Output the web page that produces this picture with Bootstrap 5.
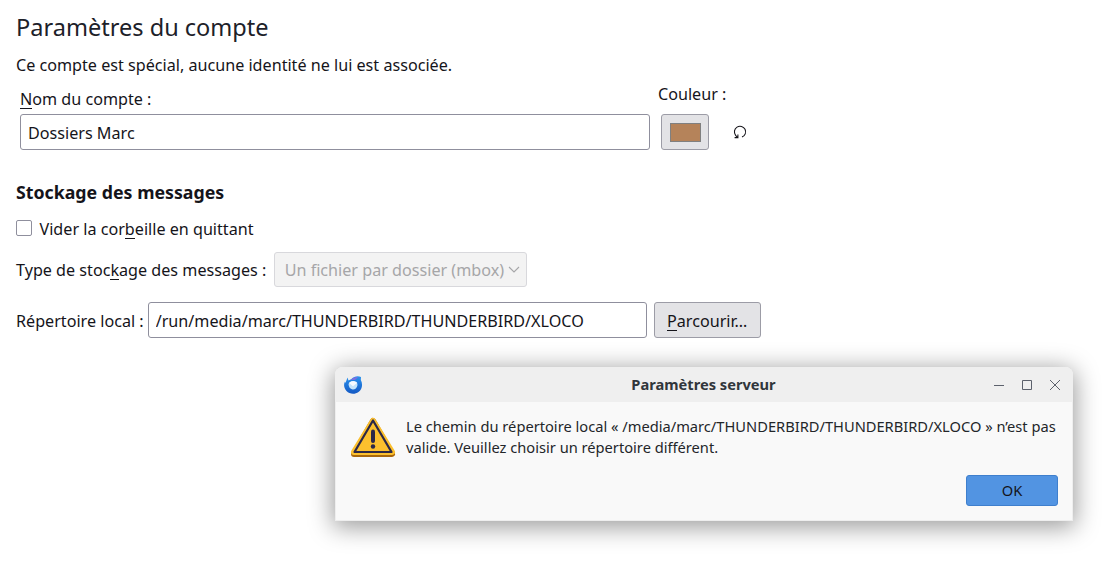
<!DOCTYPE html>
<html lang="fr">
<head>
    <meta charset="UTF-8">
    <meta name="viewport" content="width=device-width, initial-scale=1.0">
    <title>Paramètres du compte</title>
    <link rel="stylesheet" href="https://cdn.jsdelivr.net/npm/bootstrap@5.3.0/dist/css/bootstrap.min.css">
    <style>
        body {
            font-family: "Noto Sans", sans-serif;
            font-size: 16.15px;
            line-height: 22px;
            color: #15141a;
            background: #fff;
            overflow: hidden;
            white-space: nowrap;
        }
        .page { padding: 11px 16px 0; }
        .page-title { font-size: 23.55px; line-height: 33px; font-weight: 400; color: #1d2129; margin: 0 0 10px; }
        .section-title { font-size: 17.75px; line-height: 24px; font-weight: 700; margin: 30px 0 14px; }
        /* Access key underline */
        .key { border-bottom: 1px solid #15141a; display: inline-block; line-height: 18px; }
        .form-control, .form-check-input, .btn {
            border-radius: 3px;
            color: #15141a;
            box-shadow: none;
        }
        .form-control {
            height: 36px;
            padding: 2px 7px 0;
            border-color: #8f8f9d;
            font-size: 16.15px;
        }
        .account-row { margin-top: 7px; }
        .name-col { width: 630px; margin-left: 4px; padding-top: 5px; }
        .name-col label { margin-bottom: 4px; }
        .color-col { margin-left: 8px; }
        .color-col label { margin-bottom: 9px; }
        .btn-grey {
            height: 36px;
            padding: 0;
            font-size: 16.15px;
            background: #e3e3e6;
            border: 1px solid #9c9ca6;
        }
        .btn-color { width: 48px; margin-left: 3px; }
        .swatch { width: 31px; height: 19px; background: #b5835a; border: 1px solid #808080; }
        .reset { margin-left: 24px; }
        .form-check-input { width: 16px; height: 16px; margin: 0 7.5px 2px 0; border-color: #8f8f9d; }
        .form-check-input[type=checkbox] { border-radius: 2px; }
        .storage-select {
            width: 253px;
            height: 35px;
            margin-left: 7.4px;
            padding: 0 6px 0 10px;
            color: #a6a6a8;
            background: #f3f3f3;
            border: 1px solid #d8d8dc;
            border-radius: 3px;
        }
        .path-row { margin-top: 15px; }
        .path-row label { padding-top: 2px; }
        .path-input { width: 499px; margin: 0 7px 0 4px; }
        .btn-browse { width: 107px; padding-top: 2px; }

        /* Alert window floating over the page */
        .alert-window {
            position: absolute;
            left: 335px;
            top: 367px;
            width: 738px;
            height: 154px;
            background: #f9f9f9;
            border-radius: 8px 8px 0 0;
            box-shadow: 0 4px 24px 2px rgba(0, 0, 0, .4), inset 0 0 0 1px #eee;
            font-size: 14.67px;
            line-height: 21px;
            color: #232629;
        }
        .window-bar { height: 35px; padding: 0 12px 0 9px; background: #efefef; border-radius: 8px 8px 0 0; }
        .window-title { font-weight: 700; color: #31363b; }
        .window-body { padding: 14px 15px 0; }
        .warning-icon { margin-top: 1px; }
        .alert-text { margin-left: 10px; }
        .ok-row { margin-top: 17px; }
        .btn-ok {
            width: 92px;
            height: 31px;
            padding: 0 0 2px;
            font-size: 14.67px;
            background: #5294e2;
            border: 1px solid #3f7fcd;
        }
    </style>
</head>

<body>
    <div class="page">
        <h1 class="page-title">Paramètres du compte</h1>
        <div>Ce compte est spécial, aucune identité ne lui est associée.</div>

        <div class="account-row d-flex align-items-start">
            <div class="name-col">
                <label class="d-block" for="name"><span class="key">N</span>om du compte :</label>
                <input type="text" id="name" class="form-control" value="Dossiers Marc">
            </div>
            <div class="color-col">
                <label class="d-block">Couleur :</label>
                <div class="d-flex align-items-center">
                    <button class="btn btn-grey btn-color d-flex align-items-center justify-content-center"><span class="swatch"></span></button>
                    <svg class="reset" width="14" height="14" viewBox="0 0 14 14" fill="none" stroke="#15141a" stroke-width="1.1">
                        <path d="M9 12.100A5.600 5.600 0 1 0 2.600 10.300L4.500 12.400M1.600 12.600H4.900V9.400"/>
                    </svg>
                </div>
            </div>
        </div>

        <h2 class="section-title">Stockage des messages</h2>

        <div class="d-flex align-items-center">
            <input type="checkbox" id="trash" class="form-check-input">
            <label for="trash">Vider la cor<span class="key">b</span>eille en quittant</label>
        </div>

        <div class="d-flex align-items-center mt-2 pt-1">
            <label>Type de stoc<span class="key">k</span>age des messages :</label>
            <div class="storage-select d-flex align-items-center justify-content-between">
                <span>Un fichier par dossier (mbox)</span>
                <svg width="12" height="8" viewBox="0 0 12 8" fill="none" stroke="#a6a6a8" stroke-width="1.1"><path d="M1 1L6 6L11 1"/></svg>
            </div>
        </div>

        <div class="path-row d-flex align-items-center">
            <label for="path">Répertoire local :</label>
            <input type="text" id="path" class="form-control path-input" value="/run/media/marc/THUNDERBIRD/THUNDERBIRD/XLOCO">
            <button class="btn btn-grey btn-browse"><span class="key">P</span>arcourir…</button>
        </div>
    </div>

    <div class="alert-window">
        <div class="window-bar d-flex align-items-center justify-content-between">
            <svg width="70" height="18" viewBox="0 0 70 18">
                <defs>
                    <linearGradient id="bird" x1="0" y1="0" x2="0" y2="1">
                        <stop offset="0" stop-color="#2a93ee"/>
                        <stop offset="1" stop-color="#1459c4"/>
                    </linearGradient>
                </defs>
                <path d="M3.500 1.500L4.500 4.500L7.500 3C10 .2 14 -.2 17 1L16.800 4C19.200 8 18 13.500 14.500 16C11 18.600 5.500 18.300 2.500 15C-.3 12 -.5 8 1 5.500L1.500 7Z" fill="url(#bird)"/>
                <path d="M6.800 4C9 1.300 12 .8 14 1.200L11 4Z" fill="#7b6fe0"/>
                <path d="M4.500 8C6 4.800 10 4.200 13 6.300L13.500 9C13 12.500 10.500 13.800 8.500 13.500C6 13 4.700 11 4.500 8Z" fill="#c3e4fb"/>
                <path d="M5 7C7 4.500 11 4.800 13 7L9 10.200Z" fill="#f6fbff"/>
            </svg>
            <span class="window-title">Paramètres serveur</span>
            <svg width="68" height="12" viewBox="0 0 68 12" fill="none" stroke="#5c616c">
                <path d="M1 6.500H11M29.500 1.500h9v9h-9zM57 1L67 11M67 1L57 11"/>
            </svg>
        </div>
        <div class="window-body">
            <div class="d-flex align-items-start">
                <svg class="warning-icon flex-shrink-0" width="46" height="41" viewBox="0 0 46 41">
                    <path d="M23 4L42 37H4Z" fill="#a9680c" stroke="#a9680c" stroke-width="6" stroke-linejoin="round"/>
                    <path d="M23 4L42 35H4Z" fill="#fcc02e" stroke="#fcc02e" stroke-width="6" stroke-linejoin="round"/>
                    <path d="M23 3.500L41.500 35H4.500Z" fill="none" stroke="#2c2848" stroke-width="2.200" stroke-linejoin="round"/>
                    <path d="M23 14.500V24" stroke="#2c2848" stroke-width="4" stroke-linecap="round"/>
                    <circle cx="23" cy="29.500" r="2.200" fill="#2c2848"/>
                </svg>
                <div class="alert-text">Le chemin du répertoire local « /media/marc/THUNDERBIRD/THUNDERBIRD/XLOCO » n’est pas<br>valide. Veuillez choisir un répertoire différent.</div>
            </div>
            <div class="ok-row d-flex justify-content-end">
                <button class="btn btn-ok">OK</button>
            </div>
        </div>
    </div>
    <script src="https://cdn.jsdelivr.net/npm/bootstrap@5.3.0/dist/js/bootstrap.bundle.min.js"></script>
</body>
</html>
